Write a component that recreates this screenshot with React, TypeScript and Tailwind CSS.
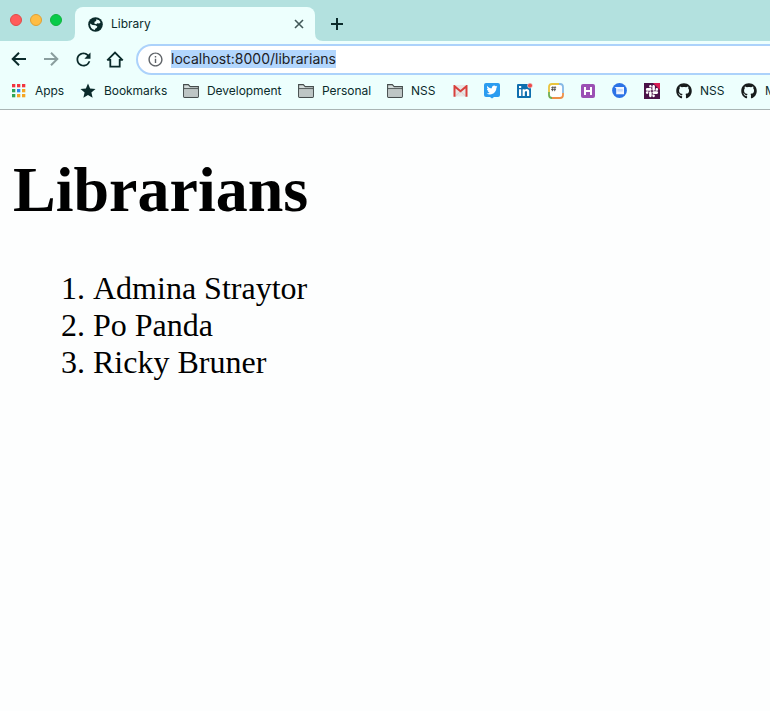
import React from "react";
import { MdRefresh, MdInfoOutline, MdStar } from "react-icons/md";
import { FaGithub, FaTwitter, FaSlack } from "react-icons/fa";

function Globe() {
  return (
    <svg width="15" height="15" viewBox="0 0 15 15" className="block">
      <circle cx="7.5" cy="7.5" r="7.3" fill="#0b2b2b" />
      <path d="M8.3 2.2Q11.6 2.6 12.6 5.2L11.2 6.6 9.3 6.2 8.2 7.2 6.3 6.4 6.6 4.8 8.2 4.1Z" fill="#edfffd" />
      <path d="M2 6.6 4.6 8 7.4 8.3 9.4 9.4 8.6 11 7.4 11.4 6.8 13Q2.2 12.2 2 6.6Z" fill="#edfffd" />
    </svg>
  );
}

function Arrow({ className }: { className: string }) {
  return (
    <svg width="20" height="20" viewBox="0 0 20 20" className={className}>
      <path d="M17 10H4.2M10 3.7 3.7 10 10 16.3" fill="none" stroke="currentColor" strokeWidth="2" />
    </svg>
  );
}

function Folder() {
  return (
    <svg width="16" height="14" viewBox="0 0 16 14" className="block">
      <path d="M.6 12.5V.6H5.3L7.2 2.6H15.4V12.5Q15.4 13.4 14.5 13.4H1.5Q.6 13.4.6 12.5Z" fill="#d3dcdb" stroke="#464d4d" strokeWidth="1.1" />
      <path d="M1 4.7H15" stroke="#464d4d" strokeWidth="1.1" />
      <path d="M1.2 5.3H14.8V12.8H1.2Z" fill="#bec6c5" />
    </svg>
  );
}

const dots = ["#f2353f", "#f2353f", "#f2353f", "#2ea457", "#2f86ee", "#f5a623", "#2ea457", "#f5a623", "#f5a623"];

function Apps() {
  return (
    <svg width="14" height="14" viewBox="0 0 14 14" className="block">
      {dots.map((c, i) => (
        <rect key={i} x={(i % 3) * 5} y={Math.floor(i / 3) * 5} width="3.3" height="3.3" fill={c} />
      ))}
    </svg>
  );
}

function Gmail() {
  return (
    <svg width="15" height="12" viewBox="0 0 15 12" className="block translate-x-px">
      <rect x="1" width="13" height="11.5" rx="1" fill="#e9e5e4" />
      <path d="M2.5 11 7.5 6.3 12.5 11" fill="none" stroke="#d0cecd" />
      <path d="M1.5 11.7V1.2L7.5 6.3 13.5 1.2V11.7" fill="none" stroke="#d8403c" strokeWidth="2" />
    </svg>
  );
}

function Twitter() {
  return (
    <svg width="16" height="16" viewBox="0 0 16 16" className="block">
      <path d="M2 0H14Q16 0 16 2V12Q16 14 14 14H10L8 15.6 6 14H2Q0 14 0 12V2Q0 0 2 0Z" fill="#2b9cf0" />
      <FaTwitter x="2.5" y="1.5" width="11" height="11" size="11" color="#fff" />
    </svg>
  );
}

function LinkedIn() {
  return (
    <svg width="16" height="16" viewBox="0 0 16 16" className="block">
      <rect y="1" width="14" height="14" rx="1" fill="#0f6fae" />
      <path d="M2 6.2H4.2V13H2ZM2 3H4.2V5H2ZM5.6 6.2H7.7V7.1Q8.4 6 9.7 6 12.2 6 12.2 8.8V13H10V9.3Q10 7.9 9 7.9 7.8 7.9 7.8 9.4V13H5.6Z" fill="#fff" />
      <circle cx="13" cy="2.6" r="2.5" fill="#ef4b4b" stroke="#edfffd" strokeWidth=".6" />
    </svg>
  );
}

function HashNote() {
  return (
    <svg width="16" height="16" viewBox="0 0 16 16" className="block">
      <rect x="1" y="1" width="14" height="14" rx="3" fill="#fff" />
      <path d="M1 9V4Q1 1 4 1H11" fill="none" stroke="#e9c53e" strokeWidth="1.8" />
      <path d="M11 1H12Q15 1 15 4V10" fill="none" stroke="#86b9e6" strokeWidth="1.8" />
      <path d="M15 10V12Q15 15 12 15H4" fill="none" stroke="#ee8f48" strokeWidth="1.8" />
      <path d="M4 15Q1 15 1 12V9" fill="none" stroke="#6fae50" strokeWidth="1.8" />
      <path d="M4.9 3.2 4.4 8.2M7.1 3.2 6.6 8.2M3.2 4.7H8.2M3 6.6H8" stroke="#444" strokeWidth=".8" />
    </svg>
  );
}

function HTile() {
  return (
    <svg width="14" height="14" viewBox="0 0 14 14" className="block">
      <rect width="14" height="14" rx="2" fill="#9b50b4" />
      <path d="M4 3V11M10 3V11M4 7H10" stroke="#fff" strokeWidth="2" />
    </svg>
  );
}

function Messages() {
  return (
    <svg width="15" height="15" viewBox="0 0 15 15" className="block">
      <circle cx="7.5" cy="7.5" r="7.4" fill="#2c73e6" />
      <path d="M2.6 4H12V11.2H4.2V5.6Z" fill="#f1f6ff" />
      <path d="M5.4 6H10.8V8.6H5.4Z" fill="#c4d9fa" />
    </svg>
  );
}

function SlackTile() {
  return (
    <svg width="16" height="16" viewBox="0 0 16 16" className="block">
      <rect width="16" height="16" fill="#4a1248" />
      <path d="M9 0H16V7Z" fill="#d81e54" />
      <FaSlack x="1" y="1" width="14" height="14" size="14" color="#fff" />
    </svg>
  );
}

function Home() {
  return (
    <svg width="18" height="17" viewBox="0 0 18 17" className="block">
      <path d="M1.2 9.3 9 1.5 16.8 9.3M1.6 8.9H4.3V15.7H13.7V8.9H16.4" fill="none" stroke="#0b2b2b" strokeWidth="1.8" />
    </svg>
  );
}

const bookmarks = [
  { icon: <Apps />, box: "w-[69px] gap-[9px]", label: "Apps", text: "tracking-[-0.05px]" },
  { icon: <MdStar size={18} className="-mx-[2px]" />, box: "w-[102px] gap-[9px]", label: "Bookmarks", text: "tracking-[-0.06px]" },
  { icon: <Folder />, box: "w-[115px] gap-[8px]", label: "Development", text: "tracking-[-0.04px]" },
  { icon: <Folder />, box: "w-[89px] gap-[8px]", label: "Personal", text: "tracking-[-0.04px]" },
  { icon: <Folder />, box: "w-[65px] gap-[8px]", label: "NSS", text: "tracking-[-0.05px]" },
  { icon: <Gmail />, box: "w-[32px]" },
  { icon: <Twitter />, box: "w-[33px]" },
  { icon: <LinkedIn />, box: "w-[31px]" },
  { icon: <HashNote />, box: "w-[33px]" },
  { icon: <HTile />, box: "w-[31px]" },
  { icon: <Messages />, box: "w-[32px]" },
  { icon: <SlackTile />, box: "w-[32px]" },
  { icon: <FaGithub size={16} color="#171c1c" />, box: "w-[65px] gap-[8px]", label: "NSS", text: "tracking-[-0.05px]" },
  { icon: <FaGithub size={16} color="#171c1c" />, box: "w-[65px] gap-[8px]", label: "M", text: "tracking-normal" },
];

const people = ["Admina Straytor", "Po Panda", "Ricky Bruner"];

export default function App() {
  return (
    <div className="flex h-[711px] w-[770px] flex-col overflow-hidden bg-[#fdfefe] font-[Inter,sans-serif] text-[#0b2b2b]">
      <header className="shrink-0 bg-[#edfffd]">
        <div className="flex h-[41px] items-end bg-[#b3e1df]">
          <div className="mb-[15px] ml-[10px] flex gap-2">
            <span className="size-3 rounded-full border border-[#e04b48] bg-[#ff5b5b]" />
            <span className="size-3 rounded-full border border-[#dfa035] bg-[#ffbd44]" />
            <span className="size-3 rounded-full border border-[#10b43c] bg-[#08cb4a]" />
          </div>
          <svg width="8" height="8" viewBox="0 0 8 8" className="ml-[5px]"><path d="M8 0V8H0Q8 8 8 0Z" fill="#edfffd" /></svg>
          <div className="flex h-[34px] w-[240px] items-center rounded-t-lg bg-[#edfffd] pl-[13px] pr-[11px]">
            <Globe />
            <span className="ml-[8px] text-[12px] tracking-[0px]">Library</span>
            <svg width="10" height="10" viewBox="0 0 10 10" className="ml-auto"><path d="M1 1 9 9M9 1 1 9" stroke="#425858" strokeWidth="1.6" /></svg>
          </div>
          <svg width="8" height="8" viewBox="0 0 8 8"><path d="M0 0V8H8Q0 8 0 0Z" fill="#edfffd" /></svg>
          <svg width="12" height="12" viewBox="0 0 12 12" className="mb-[11px] ml-[8px]"><path d="M6 0V12M0 6H12" stroke="#0b2b2b" strokeWidth="2" /></svg>
        </div>
        <div className="flex h-9 items-center pl-[9px]">
          <Arrow className="shrink-0" />
          <Arrow className="ml-3 shrink-0 rotate-180 text-[#8a9e9e]" />
          <MdRefresh size={21} className="ml-3 shrink-0" />
          <div className="ml-[12px] shrink-0"><Home /></div>
          <div className="ml-[12px] flex h-[31px] w-[660px] shrink-0 items-center rounded-full border-2 border-[#acd2fb] bg-white pl-[9px]">
            <MdInfoOutline size={17} className="text-[#5f6368]" />
            <span className="ml-[7px] h-[18px] whitespace-nowrap bg-[#b2d6fd] text-[14px] leading-[18px] text-[#202124]">localhost:8000/librarians</span>
          </div>
        </div>
        <nav className="flex h-[33px] items-center border-b border-[#a9b5b4] pb-[5px] pl-[12px]">
          {bookmarks.map((b, i) => (
            <div key={i} className={"flex shrink-0 items-center whitespace-nowrap text-[12px] " + b.box}>
              {b.icon}
              {b.label && <span className={b.text}>{b.label}</span>}
            </div>
          ))}
        </nav>
      </header>
      <main className="pl-[13px] pt-[43px] font-['Liberation_Serif',serif] text-black">
        <h1 className="text-[64px] font-bold leading-[74px]">Librarians</h1>
        <ol className="mt-[43px] pl-12 text-[32px] leading-[37px]">
          {people.map((name, i) => (
            <li key={name} className="flex gap-2"><span>{i + 1}.</span><span>{name}</span></li>
          ))}
        </ol>
      </main>
    </div>
  );
}
